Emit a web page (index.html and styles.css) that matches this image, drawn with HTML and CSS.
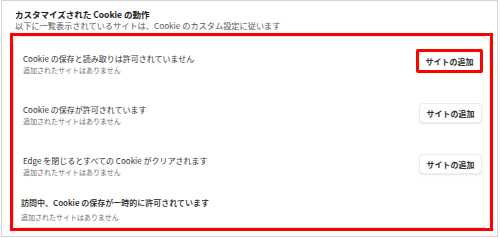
FILE: index.html
```html
<!DOCTYPE html>
<html lang="ja">
<head>
<meta charset="utf-8">
<link rel="stylesheet" href="styles.css">
</head>
<body>
<div class="frame">
  <div class="head">
    <div class="head-title">カスタマイズされた Cookie の動作</div>
    <div class="head-sub">以下に一覧表示されているサイトは、Cookie のカスタム設定に従います</div>
  </div>
  <div class="card">
    <div class="row">
      <div class="text">
        <div class="title">Cookie の保存と読み取りは許可されていません</div>
        <div class="sub">追加されたサイトはありません</div>
      </div>
      <button class="btn btn-marked">サイトの追加</button>
    </div>
    <div class="row">
      <div class="text">
        <div class="title">Cookie の保存が許可されています</div>
        <div class="sub">追加されたサイトはありません</div>
      </div>
      <button class="btn">サイトの追加</button>
    </div>
    <div class="row">
      <div class="text">
        <div class="title">Edge を閉じるとすべての Cookie がクリアされます</div>
        <div class="sub">追加されたサイトはありません</div>
      </div>
      <button class="btn">サイトの追加</button>
    </div>
    <div class="row row-last">
      <div class="text">
        <div class="title">訪問中、Cookie の保存が一時的に許可されています</div>
        <div class="sub">追加されたサイトはありません</div>
      </div>
    </div>
  </div>
</div>
</body>
</html>
```
FILE: styles.css
```css
html, body {
  margin: 0;
  padding: 0;
  background: #ffffff;
}
body {
  font-family: "Noto Sans CJK JP", "Noto Sans", sans-serif;
  width: 500px;
  height: 238px;
  overflow: hidden;
}
.frame {
  box-sizing: border-box;
  width: 497px;
  height: 237px;
  margin-left: 1px;
  border: 1px solid #d4d4d4;
  background: #ffffff;
  padding: 7px 0 0 0;
}
.head {
  padding-left: 13px;
}
.head-title {
  font-size: 8.5px;
  line-height: 12px;
  font-weight: 700;
  color: #1b1b1b;
  white-space: nowrap;
}
.head-sub {
  font-size: 8.2px;
  line-height: 11px;
  color: #5a5a5a;
  white-space: nowrap;
}
.card {
  position: relative;
  box-sizing: border-box;
  width: 477px;
  height: 192px;
  margin: 5px 0 0 11px;
  border: 1px solid #e2e2e2;
  border-radius: 8px;
  display: flex;
  flex-direction: column;
}
.card::after {
  content: "";
  position: absolute;
  left: -4px;
  top: -4px;
  right: -4px;
  bottom: -4px;
  border: 3px solid #ff0000;
  pointer-events: none;
}
.row {
  display: flex;
  align-items: center;
  justify-content: space-between;
  padding: 16px 7px 13px 9px;
  height: 51px;
  box-sizing: border-box;
}
.text {
  display: flex;
  flex-direction: column;
}
.title {
  font-size: 8px;
  line-height: 12px;
  color: #333333;
  white-space: nowrap;
}
.sub {
  font-size: 7px;
  line-height: 10px;
  color: #6e6e6e;
  white-space: nowrap;
}
.row-last {
  height: auto;
  padding: 7px 7px 0 7px;
}
.row-last .title {
  font-weight: 500;
  color: #222222;
}
.row-last .sub {
  margin-top: 3px;
}
.btn {
  position: relative;
  box-sizing: border-box;
  width: 63px;
  height: 20px;
  margin-bottom: 4px;
  padding: 0;
  font-family: "Noto Sans CJK JP", "Noto Sans", sans-serif;
  font-size: 8px;
  font-weight: 700;
  color: #333333;
  background: #ffffff;
  border: 1px solid #ececec;
  border-radius: 4px;
  box-shadow: 0 1px 2px rgba(0, 0, 0, 0.1);
}
.btn-marked {
  margin-bottom: 6px;
  margin-right: 1px;
}
.btn-marked::after {
  content: "";
  position: absolute;
  left: -3px;
  top: -3px;
  right: -3px;
  bottom: -3px;
  border: 3px solid #ff0000;
  border-radius: 2px;
  pointer-events: none;
}
```
